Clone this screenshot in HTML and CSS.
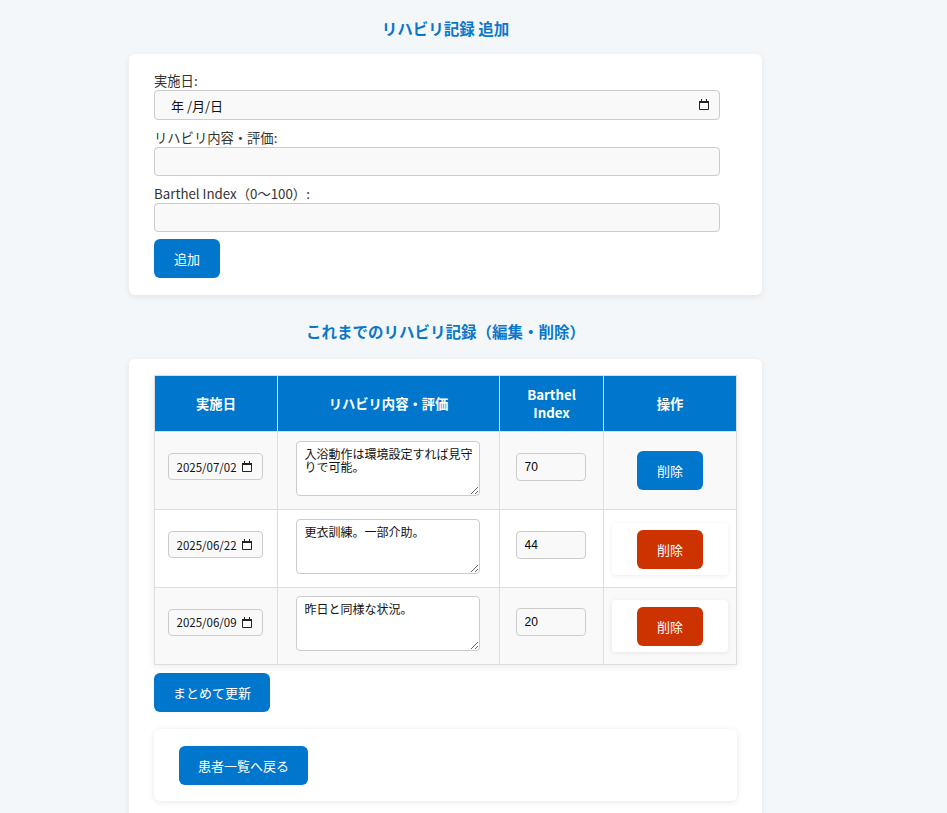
FILE: index.html
```html
<!DOCTYPE html>
<html lang="ja">
<head>
<meta charset="utf-8">
<title>リハビリ記録</title>
<link rel="stylesheet" href="styles.css">
</head>
<body>
<div class="page">
  <h2 class="title">リハビリ記録 追加</h2>
  <form class="card add-form">
    <label class="lbl">実施日:</label>
    <div class="date-field wide">
      <input class="field date-top" type="text" value="年 /月/日">
      <svg class="cal" width="10" height="11" viewBox="0 0 10 11"><rect x="2" y="0" width="1" height="2" fill="#222"/><rect x="7" y="0" width="1" height="2" fill="#222"/><rect x="0" y="2" width="10" height="2" fill="#222"/><path d="M0.5 3.5v7h9v-7" fill="none" stroke="#222" stroke-width="1"/></svg>
    </div>
    <label class="lbl">リハビリ内容・評価:</label>
    <input class="field" type="text">
    <label class="lbl">Barthel Index（0〜100）:</label>
    <input class="field" type="text">
    <button class="btn" type="button">追加</button>
  </form>

  <h2 class="title title2">これまでのリハビリ記録（編集・削除）</h2>
  <div class="card list-card">
    <table class="tbl">
      <thead>
        <tr>
          <th class="c1">実施日</th>
          <th class="c2">リハビリ内容・評価</th>
          <th class="c3">Barthel<br>Index</th>
          <th class="c4">操作</th>
        </tr>
      </thead>
      <tbody>
        <tr>
          <td><div class="date-field small"><input class="date-in" type="text" value="2025/07/02"><svg class="cal" width="10" height="11" viewBox="0 0 10 11"><rect x="2" y="0" width="1" height="2" fill="#222"/><rect x="7" y="0" width="1" height="2" fill="#222"/><rect x="0" y="2" width="10" height="2" fill="#222"/><path d="M0.5 3.5v7h9v-7" fill="none" stroke="#222" stroke-width="1"/></svg></div></td>
          <td><textarea class="ta">入浴動作は環境設定すれば見守りで可能。</textarea></td>
          <td><input class="num-in" type="text" value="70"></td>
          <td class="op"><button class="btn" type="button">削除</button></td>
        </tr>
        <tr>
          <td><div class="date-field small"><input class="date-in" type="text" value="2025/06/22"><svg class="cal" width="10" height="11" viewBox="0 0 10 11"><rect x="2" y="0" width="1" height="2" fill="#222"/><rect x="7" y="0" width="1" height="2" fill="#222"/><rect x="0" y="2" width="10" height="2" fill="#222"/><path d="M0.5 3.5v7h9v-7" fill="none" stroke="#222" stroke-width="1"/></svg></div></td>
          <td><textarea class="ta">更衣訓練。一部介助。</textarea></td>
          <td><input class="num-in" type="text" value="44"></td>
          <td class="op"><div class="del-box"><button class="btn btn-red" type="button">削除</button></div></td>
        </tr>
        <tr>
          <td><div class="date-field small"><input class="date-in" type="text" value="2025/06/09"><svg class="cal" width="10" height="11" viewBox="0 0 10 11"><rect x="2" y="0" width="1" height="2" fill="#222"/><rect x="7" y="0" width="1" height="2" fill="#222"/><rect x="0" y="2" width="10" height="2" fill="#222"/><path d="M0.5 3.5v7h9v-7" fill="none" stroke="#222" stroke-width="1"/></svg></div></td>
          <td><textarea class="ta">昨日と同様な状況。</textarea></td>
          <td><input class="num-in" type="text" value="20"></td>
          <td class="op"><div class="del-box"><button class="btn btn-red" type="button">削除</button></div></td>
        </tr>
      </tbody>
    </table>
    <button class="btn bulk" type="button">まとめて更新</button>
    <div class="back-box">
      <button class="btn back" type="button">患者一覧へ戻る</button>
    </div>
  </div>
</div>
</body>
</html>
```

FILE: styles.css
```css
html, body {
  margin: 0;
  padding: 0;
}
body {
  background: #f4f7fa;
  font-family: "Noto Sans CJK JP", "Noto Sans", sans-serif;
  color: #333;
  font-size: 13px;
}
.page {
  width: 633px;
  margin-left: 129px;
  padding-top: 16px;
}
.title {
  margin: 0 0 14px;
  text-align: center;
  font-size: 15.5px;
  line-height: 24px;
  font-weight: 700;
  color: #0a77c9;
}
.title2 {
  margin-top: 24px;
  margin-bottom: 16px;
}
.card {
  background: #fff;
  border-radius: 6px;
  box-shadow: 0 2px 6px rgba(0,0,0,0.08);
  padding: 17px 25px 17px;
}
.add-form {
  display: flex;
  flex-direction: column;
  align-items: flex-start;
}
.lbl {
  display: block;
  font-size: 13.3px;
  line-height: 19px;
  color: #333;
}
.field {
  box-sizing: border-box;
  width: 566px;
  height: 29px;
  margin: 0 0 8px;
  padding: 0 12px;
  border: 1px solid #ccc;
  border-radius: 4px;
  background: #f9f9f9;
  font-family: "Noto Sans CJK JP", sans-serif;
  font-size: 13px;
  color: #222;
  outline: none;
}
.date-field {
  position: relative;
  display: inline-block;
}
.date-field.wide {
  display: block;
}
.date-field.small {
  display: block;
  width: 95px;
  margin: 0 auto 8px;
}
.date-top {
  height: 30px;
  padding: 0 16px;
  font-size: 13px;
  color: #111;
}
.cal {
  position: absolute;
  display: block;
}
.wide .cal {
  right: 11px;
  top: 9px;
}
.small .cal {
  right: 11px;
  top: 8px;
}
.btn {
  box-sizing: border-box;
  height: 39px;
  padding: 0 20px;
  border: none;
  border-radius: 6px;
  background: #0077cc;
  color: #fff;
  font-family: "Noto Sans CJK JP", sans-serif;
  font-size: 13px;
  line-height: 39px;
  cursor: pointer;
}
.add-form .btn {
  margin-top: -1px;
}
.list-card {
  padding: 16px 25px 30px;
}
.tbl {
  width: 583px;
  border-collapse: collapse;
  box-shadow: 0 2px 8px rgba(0,0,0,0.08);
}
.tbl th {
  background: #0077cc;
  color: #fff;
  font-weight: 700;
  font-size: 13.3px;
  line-height: 18px;
  height: 55px;
  padding: 0 8px;
  border: 1px solid #ddd;
  text-align: center;
}
.tbl .c1 { width: 106px; }
.tbl .c2 { width: 205px; }
.tbl .c3 { width: 87px; }
.tbl td {
  border: 1px solid #ddd;
  text-align: center;
  vertical-align: middle;
  height: 77px;
  padding: 0 9px 0 7px;
}
.tbl td.op {
  padding: 0 8px;
}
.tbl tbody tr:nth-child(odd) td {
  background: #f9f9f9;
}
.tbl tbody tr:nth-child(even) td {
  background: #fff;
}
.tbl tbody tr:last-child td {
  height: 76px;
}
.date-in {
  box-sizing: border-box;
  display: block;
  width: 95px;
  height: 27px;
  padding: 0 0 0 8px;
  border: 1px solid #ccc;
  border-radius: 4px;
  background: #f9f9f9;
  font-family: "Noto Sans CJK JP", sans-serif;
  font-size: 11.5px;
  color: #111;
  outline: none;
}
.ta {
  box-sizing: border-box;
  display: block;
  width: 184px;
  height: 55px;
  margin: 0 auto 5px;
  padding: 5px 5px 4px 8px;
  border: 1px solid #ccc;
  border-radius: 4px;
  background: #fff;
  font-family: "Noto Sans CJK JP", sans-serif;
  font-size: 12px;
  line-height: 13px;
  color: #111;
  text-align: left;
  resize: vertical;
  outline: none;
}
.num-in {
  box-sizing: border-box;
  display: block;
  width: 70px;
  height: 28px;
  margin: 0 auto 8px;
  padding: 0 8px;
  border: 1px solid #ccc;
  border-radius: 4px;
  background: #f9f9f9;
  font-family: "Liberation Sans", Arial, sans-serif;
  font-size: 12px;
  color: #000;
  outline: none;
}
.tbl .btn {
  padding: 0 20px;
}
.del-box {
  display: flex;
  justify-content: center;
  background: #fff;
  border-radius: 4px;
  box-shadow: 0 1px 5px rgba(0,0,0,0.08);
  padding: 7px 0 6px;
}
.btn-red {
  background: #cc3300;
}
.bulk {
  display: block;
  margin-top: 8px;
  padding: 0 19px;
}
.back {
  padding: 0 19px;
}
.back-box {
  margin-top: 17px;
  background: #fff;
  border-radius: 6px;
  box-shadow: 0 1px 6px rgba(0,0,0,0.1);
  padding: 17px 25px 16px;
}
```
